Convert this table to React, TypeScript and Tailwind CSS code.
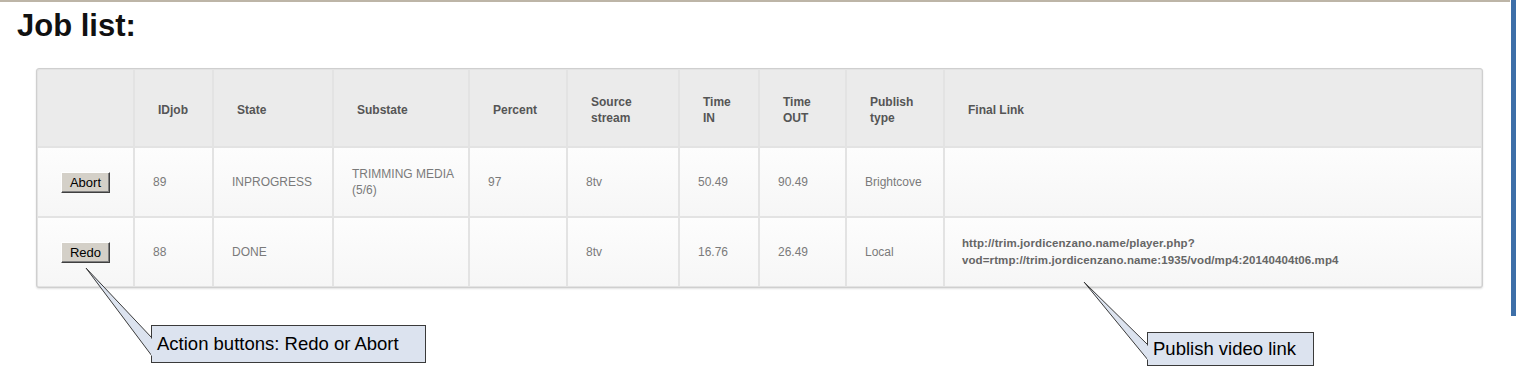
const font = { fontFamily: '"Liberation Sans", Arial, sans-serif' };

type Job = {
  action: string;
  id: string;
  state: string;
  substate: string[];
  percent: string;
  source: string;
  timeIn: string;
  timeOut: string;
  publish: string;
  link: string[];
};

const headers: string[][] = [
  [],
  ['IDjob'],
  ['State'],
  ['Substate'],
  ['Percent'],
  ['Source', 'stream'],
  ['Time', 'IN'],
  ['Time', 'OUT'],
  ['Publish', 'type'],
  ['Final Link'],
];

const jobs: Job[] = [
  {
    action: 'Abort',
    id: '89',
    state: 'INPROGRESS',
    substate: ['TRIMMING MEDIA', '(5/6)'],
    percent: '97',
    source: '8tv',
    timeIn: '50.49',
    timeOut: '90.49',
    publish: 'Brightcove',
    link: [],
  },
  {
    action: 'Redo',
    id: '88',
    state: 'DONE',
    substate: [],
    percent: '',
    source: '8tv',
    timeIn: '16.76',
    timeOut: '26.49',
    publish: 'Local',
    link: [
      'http://trim.jordicenzano.name/player.php?',
      'vod=rtmp://trim.jordicenzano.name:1935/vod/mp4:20140404t06.mp4',
    ],
  },
];

const Lines = ({ lines }: { lines: string[] }) => (
  <div>
    {lines.map((l) => (
      <div key={l}>{l}</div>
    ))}
  </div>
);

const cellBase =
  'flex items-center text-[12px] leading-[16px] text-[#7a7a7a] bg-gradient-to-b from-[#fdfdfd] to-[#f6f6f6]';

const Cell = ({ children }: { children?: React.ReactNode }) => (
  <div className={`${cellBase} pl-[18px]`}>{children}</div>
);

const Button = ({ label }: { label: string }) => (
  <button
    type="button"
    className="h-[21px] px-[8px] text-[13px] leading-[15px] text-black bg-[#d4d0c8] border border-t-white border-l-white border-r-[#404040] border-b-[#404040] shadow-[inset_-1px_-1px_0_#808080]"
  >
    {label}
  </button>
);

const Callout = ({ text, className }: { text: string; className: string }) => (
  <div
    className={`absolute flex items-center pl-[5px] bg-[#dce3ef] border border-[#3a3a3a] text-[18.5px] text-black ${className}`}
  >
    {text}
  </div>
);

export default function App() {
  return (
    <div className="relative w-[1516px] h-[366px] bg-white overflow-hidden flex" style={font}>
      <div className="flex-1 border-t-2 border-[#bdb5a7] mr-[1px]">
        <h1 className="ml-[17px] mt-[6px] text-[31px] leading-[36px] font-bold text-[#111]">Job list:</h1>
        <div className="ml-[36px] mr-[27px] mt-[24px] rounded-[3px] border border-[#cfcfcf] bg-[#e3e3e3] p-[1px] shadow-[0_1px_2px_rgba(0,0,0,0.12)]">
          <div className="grid grid-cols-[95px_77px_118px_134px_96px_110px_78px_85px_96px_1fr] grid-rows-[76px_68px_68px] gap-[2px]">
            {headers.map((h, i) => (
              <div
                key={i}
                className="flex items-center pl-[23px] pt-[4px] text-[12px] leading-[16px] font-bold text-[#555] bg-[#ebebeb] first:rounded-tl-[2px] last:rounded-tr-[2px]"
              >
                <Lines lines={h} />
              </div>
            ))}
            {jobs.map((j) => (
              <div key={j.id} className="contents">
                <div className={`${cellBase} justify-center`}>
                  <Button label={j.action} />
                </div>
                <Cell>{j.id}</Cell>
                <Cell>{j.state}</Cell>
                <Cell>
                  <Lines lines={j.substate} />
                </Cell>
                <Cell>{j.percent}</Cell>
                <Cell>{j.source}</Cell>
                <Cell>{j.timeIn}</Cell>
                <Cell>{j.timeOut}</Cell>
                <Cell>{j.publish}</Cell>
                <div className={`${cellBase} pl-[17px]`}>
                  <div className="text-[11.5px] leading-[17px] font-bold tracking-[0.1px] text-[#666]">
                    <Lines lines={j.link} />
                  </div>
                </div>
              </div>
            ))}
          </div>
        </div>
      </div>
      <div className="w-[5px] h-[316px] bg-[#3d6fa8]" />

      <svg className="absolute inset-0 pointer-events-none" width="1516" height="366">
        <polygon points="86,268 152,338 152,356" fill="#dce3ef" stroke="#3a3a3a" strokeWidth="1" />
        <polygon points="1084,282 1148,345 1148,360" fill="#dce3ef" stroke="#3a3a3a" strokeWidth="1" />
      </svg>
      <Callout text="Action buttons: Redo or Abort" className="left-[151px] top-[325px] w-[275px] h-[38px]" />
      <Callout text="Publish video link" className="left-[1147px] top-[332px] w-[167px] h-[34px]" />
      <svg className="absolute inset-0 pointer-events-none" width="1516" height="366">
        <line x1="152" y1="338.5" x2="152" y2="355.5" stroke="#dce3ef" strokeWidth="2" />
        <line x1="1148" y1="345.5" x2="1148" y2="359.5" stroke="#dce3ef" strokeWidth="2" />
      </svg>
    </div>
  );
}
